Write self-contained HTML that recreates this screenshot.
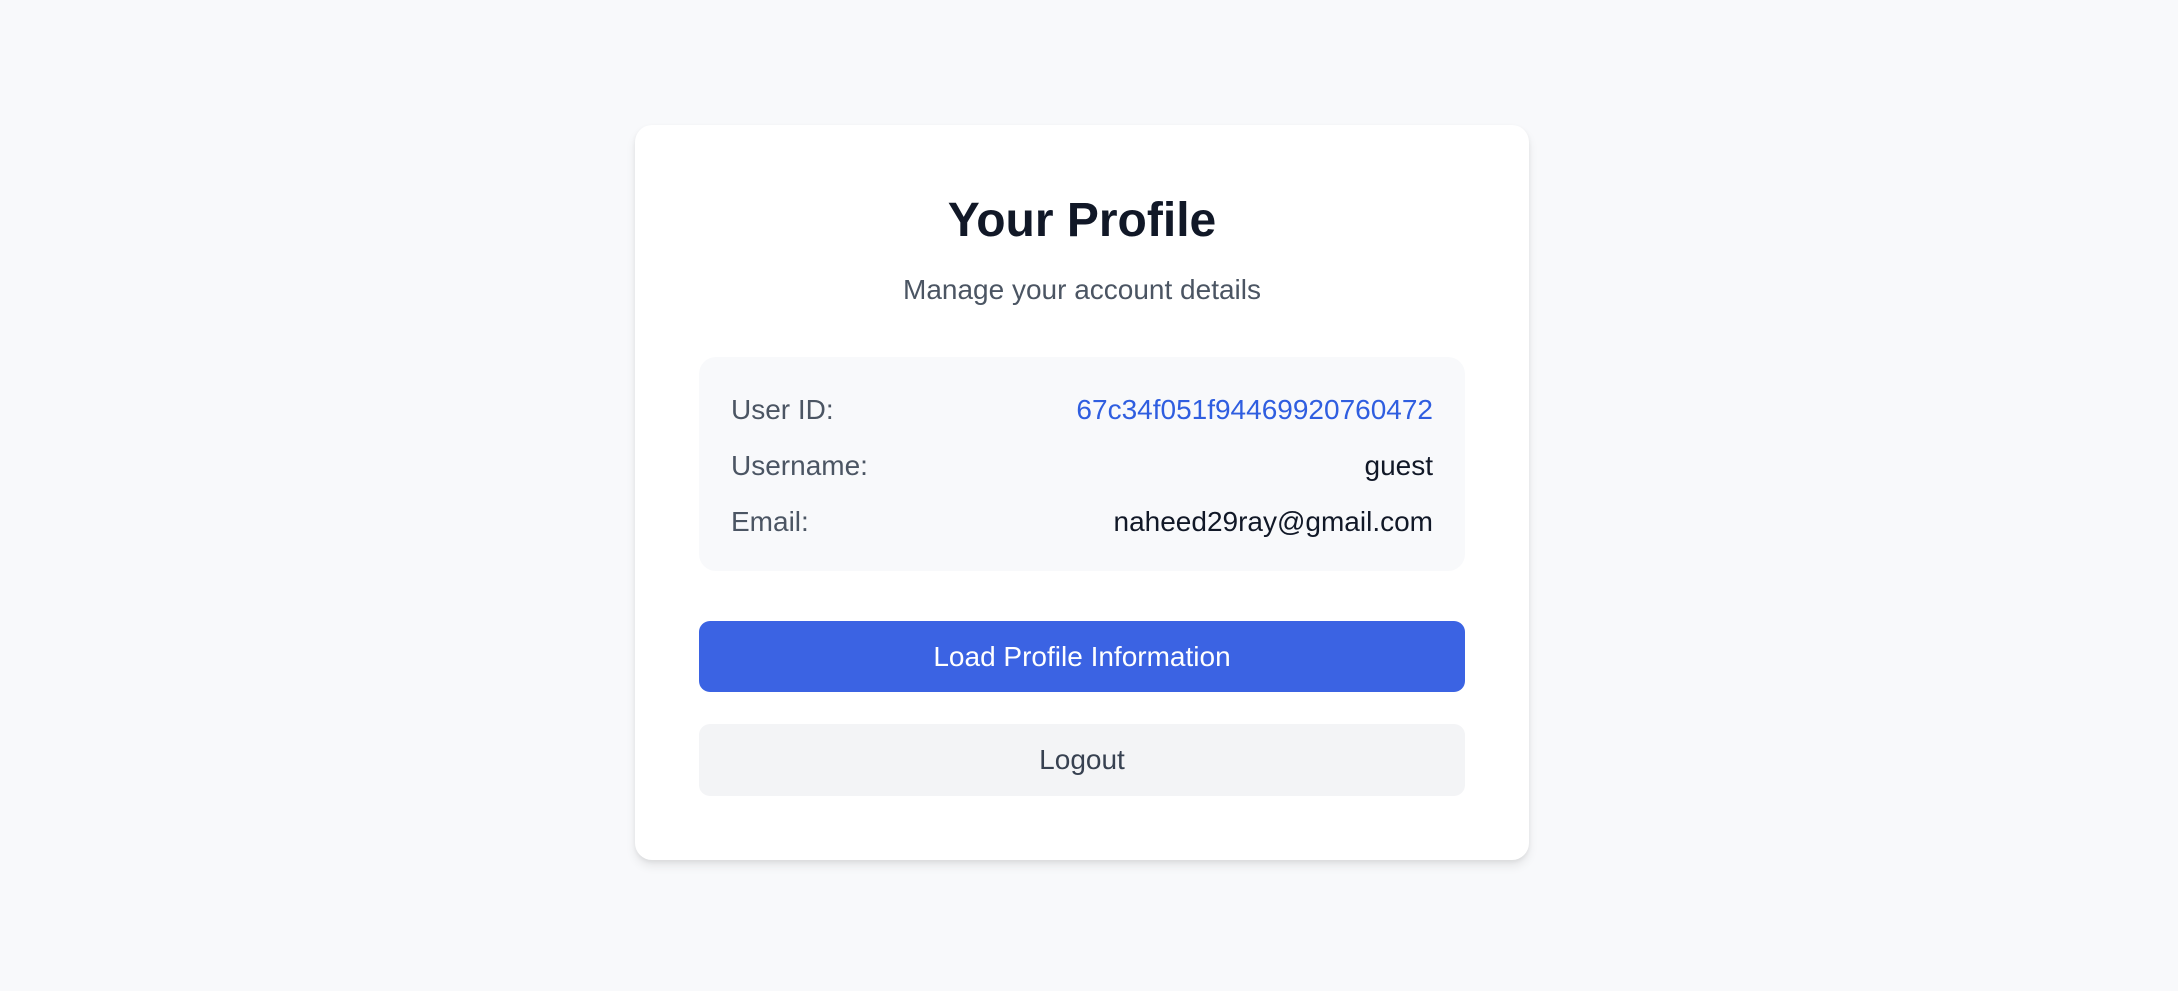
<!DOCTYPE html>
<html><head><style>
html,body{margin:0;padding:0;width:2178px;height:991px;background:#f8f9fb;font-family:"Liberation Sans",Arial,sans-serif;overflow:hidden}
.card{position:absolute;left:635px;top:125px;width:894px;height:735px;background:#fff;border-radius:17px;box-shadow:0 6px 10px rgba(0,0,0,0.08),0 2px 4px rgba(0,0,0,0.06)}
.t{position:absolute;left:635px;width:894px;text-align:center}
h1{margin:0;font-size:48px;font-weight:bold;color:#111827;top:191px;line-height:60px}
.sub{font-size:28px;color:#4b5563;top:273px;line-height:34px}
.box{position:absolute;left:699px;top:357px;width:766px;height:214px;background:#f8f9fb;border-radius:17px}
.row{position:absolute;left:731px;width:702px;font-size:28px;line-height:34px;display:flex;justify-content:space-between;color:#4b5563}
.row span+span{color:#111827}
.btn{position:absolute;left:699px;width:766px;border-radius:11px;text-align:center;font-size:28px}
</style></head><body>
<div class="card"></div>
<h1 class="t">Your Profile</h1>
<div class="t sub">Manage your account details</div>
<div class="box"></div>
<div class="row" style="top:393px"><span>User ID:</span><span style="color:#2f5ee0">67c34f051f94469920760472</span></div>
<div class="row" style="top:449px"><span>Username:</span><span>guest</span></div>
<div class="row" style="top:505px"><span>Email:</span><span>naheed29ray@gmail.com</span></div>
<div class="btn" style="top:621px;height:71px;line-height:71px;background:#3b63e3;color:#fff">Load Profile Information</div>
<div class="btn" style="top:724px;height:72px;line-height:72px;background:#f3f4f6;color:#374151">Logout</div>
</body></html>
